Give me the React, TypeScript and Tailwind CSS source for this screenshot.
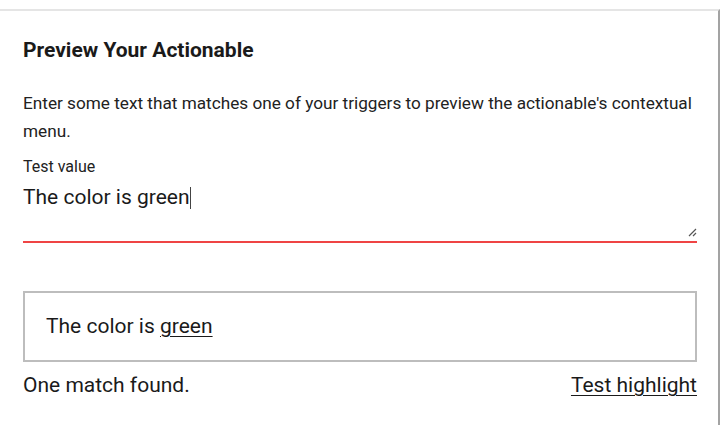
import { useState } from "react";

export default function App() {
  const [value, setValue] = useState("The color is green");

  return (
    <div className="w-[720px] h-[425px] bg-white overflow-hidden font-['Roboto',sans-serif] text-[#1a1a1a]">
      <div className="mt-[9px] h-[416px] w-[720px] border-t-2 border-r-2 border-t-[#e5e5e5] border-r-[#a3a3a3] pl-[23px] pr-[21px] pt-[25px]">
        <h2 className="text-[21px] leading-[28px] font-bold text-[#1a1a1a]">Preview Your Actionable</h2>

        <p className="mt-[25px] text-[17.2px] leading-[28px] text-[#222]">
          Enter some text that matches one of your triggers to preview the actionable's contextual menu.
        </p>

        {/* Test value field */}
        <label className="block mt-[12px] text-[16px] leading-[20px] text-[#222]">Test value</label>
        <div className="relative mt-[6px]">
          <textarea
            value={value}
            onChange={(e) => setValue(e.target.value)}
            className="block w-full h-[60px] text-[21px] leading-[28px] text-[#1a1a1a] border-b-2 border-[#ef4444] outline-none resize-none bg-transparent"
          />
          {/* caret */}
          <span className="absolute left-[167px] top-[4px] h-[22px] w-px bg-[#444]" />
          {/* resize grip */}
          <svg className="absolute right-0 bottom-[6px]" width="9" height="9" viewBox="0 0 9 9">
            <path d="M1 8 L8 1 M5 8 L8 5" stroke="#555" strokeWidth="1.2" />
          </svg>
        </div>

        {/* Preview box */}
        <div className="mt-[48px] h-[71px] border-2 border-[#bdbdbd] pl-[21px] flex items-center text-[21px] text-[#1a1a1a]">
          <span>
            The color is <span className="underline underline-offset-[3px] decoration-1">green</span>
          </span>
        </div>

        <div className="mt-[9px] flex items-center justify-between text-[21px] leading-[28px] text-[#1a1a1a]">
          <span>One match found.</span>
          <a href="#" className="underline underline-offset-[3px] decoration-1">Test highlight</a>
        </div>
      </div>
    </div>
  );
}
